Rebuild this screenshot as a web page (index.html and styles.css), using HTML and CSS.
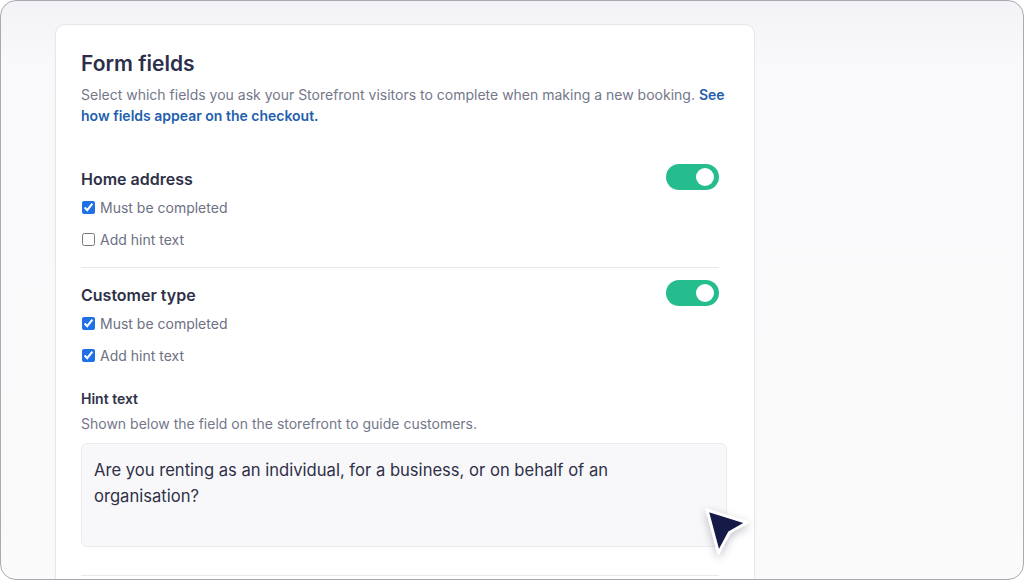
FILE: index.html
```html
<!DOCTYPE html>
<html lang="en">
<head>
    <meta charset="UTF-8">
    <meta name="viewport" content="width=device-width, initial-scale=1.0">
    <title>Form fields</title>
    <link rel="stylesheet" href="styles.css">
</head>
<body>
    <div class="frame">
        <div class="card">
            <h2 class="title">Form fields</h2>
            <p class="desc">Select which fields you ask your Storefront visitors to complete when making a new booking. <a href="#">See how fields appear on the checkout.</a></p>

            <div class="field first">
                <div class="field-head">
                    <h3>Home address</h3>
                    <span class="toggle on"><span class="knob"></span></span>
                </div>
                <label class="check"><input type="checkbox" checked> Must be completed</label>
                <label class="check"><input type="checkbox"> Add hint text</label>
            </div>

            <div class="field">
                <div class="field-head">
                    <h3>Customer type</h3>
                    <span class="toggle on"><span class="knob"></span></span>
                </div>
                <label class="check"><input type="checkbox" checked> Must be completed</label>
                <label class="check"><input type="checkbox" checked> Add hint text</label>

                <div class="hint">
                    <h4>Hint text</h4>
                    <p>Shown below the field on the storefront to guide customers.</p>
                    <div class="hint-box">Are you renting as an individual, for a business, or on behalf of an organisation?</div>
                </div>
            </div>

            <div class="field last"></div>
        </div>

        <svg class="cursor" width="54" height="58" viewBox="0 0 54 58">
            <path d="M7 7 L47 19.5 L29.5 29.5 L18.5 50 Z" fill="#161a47" stroke="#fff" stroke-width="3" stroke-linejoin="round"/>
        </svg>
    </div>
</body>
</html>
```

FILE: styles.css
```css
* { margin: 0; padding: 0; box-sizing: border-box; }
body {
    font-family: Inter, "Noto Sans", sans-serif;
    background: #fff;
    overflow: hidden;
}
.frame {
    position: relative;
    width: 1024px;
    height: 580px;
    border: 1px solid #a9a9b4;
    border-radius: 16px;
    overflow: hidden;
    background: linear-gradient(180deg, #f3f3f7 0%, #f9f9fb 60px, #fafafb 100%);
}
.card {
    width: 700px;
    margin: 23px 0 0 54px;
    background: #fff;
    border: 1px solid #e6e6ec;
    border-radius: 10px;
    padding: 25px 25px 60px 25px;
    box-shadow: 0 1px 3px rgba(30, 30, 60, 0.03);
}
.title {
    font-size: 21px;
    line-height: 28px;
    font-weight: 600;
    color: #2c2e4a;
}
.desc {
    margin-top: 6px;
    font-size: 14px;
    line-height: 21px;
    color: #747789;
}
.desc a {
    color: #1f5fad;
    font-weight: 600;
    text-decoration: none;
}
.field {
    margin-right: 10px;
    padding: 12px 0 18px;
    border-top: 1px solid #e8e8ed;
}
.field.first {
    border-top: none;
    margin-top: 38px;
    padding-top: 0;
}
.field.last { padding: 0; }
.field-head {
    display: flex;
    align-items: center;
    justify-content: space-between;
    height: 26px;
    margin-bottom: 7px;
}
.field-head h3 {
    padding-top: 4px;
    font-size: 16px;
    font-weight: 600;
    color: #2f3148;
}
.toggle {
    display: flex;
    align-items: center;
    justify-content: flex-end;
    width: 53px;
    height: 26px;
    padding-right: 5px;
    border-radius: 13px;
    background: #cfd2da;
}
.toggle.on { background: #25bd8e; }
.knob {
    width: 18px;
    height: 18px;
    border-radius: 50%;
    background: #fff;
}
.check {
    display: flex;
    align-items: center;
    gap: 5px;
    height: 20px;
    margin-bottom: 12px;
    font-size: 14px;
    color: #6e7083;
}
.check:last-of-type { margin-bottom: 0; }
.check input {
    width: 13px;
    height: 13px;
    margin-left: 1px;
    accent-color: #1f6fe6;
}
.hint { padding-top: 24px; padding-bottom: 10px; }
.hint h4 {
    font-size: 14px;
    line-height: 20px;
    font-weight: 600;
    color: #2f3148;
}
.hint p {
    margin-top: 5px;
    font-size: 14px;
    line-height: 20px;
    color: #747789;
}
.hint-box {
    width: 646px;
    height: 104px;
    margin-top: 9px;
    padding: 13px 40px 0 12px;
    background: #f8f8fa;
    border: 1px solid #ebebef;
    border-radius: 6px;
    font-size: 16.6px;
    line-height: 26px;
    color: #2f3148;
}
.cursor {
    position: absolute;
    left: 699px;
    top: 502px;
    filter: drop-shadow(0 3px 4px rgba(20, 20, 50, 0.25));
}
```
